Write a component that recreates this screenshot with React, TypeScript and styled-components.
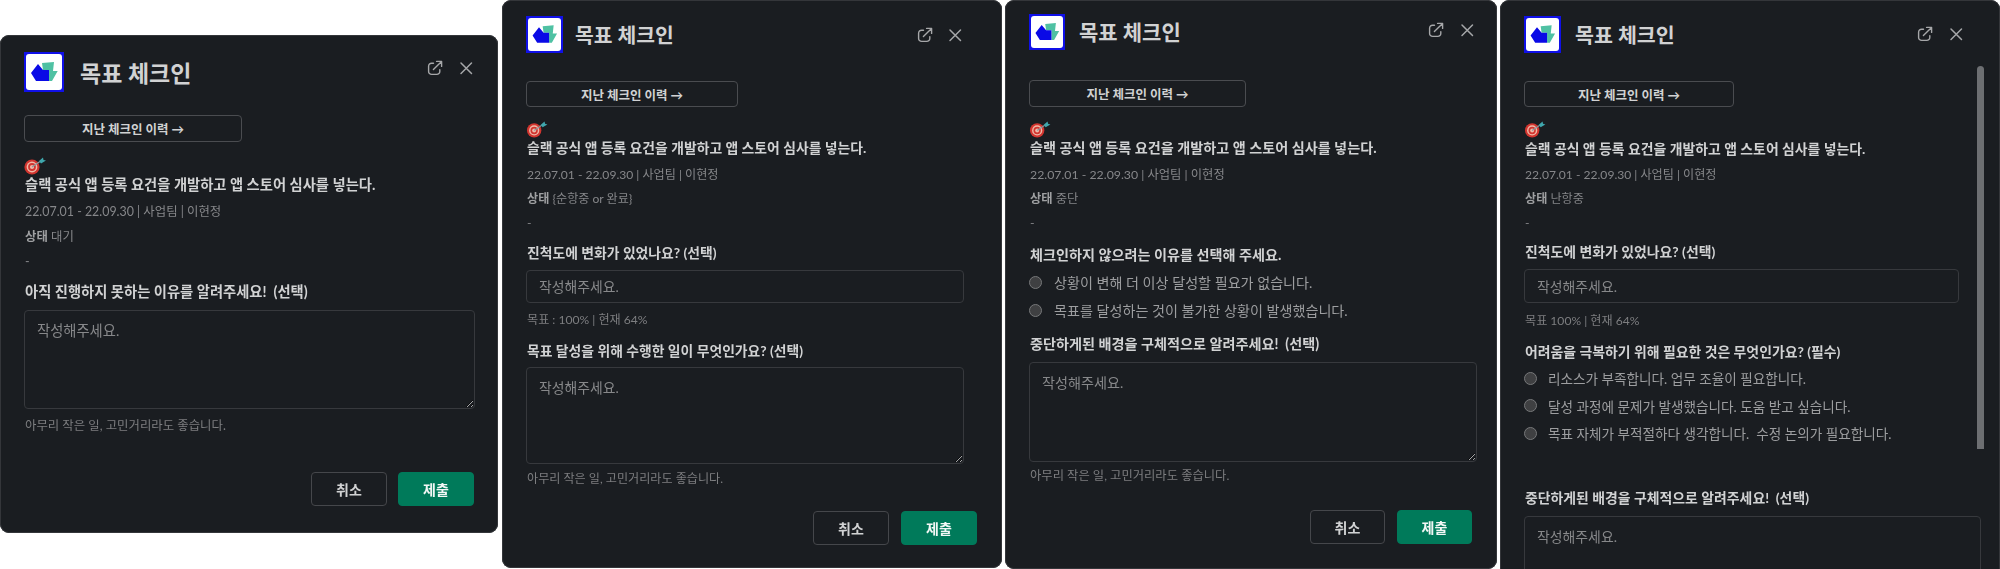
import React from "react";
import styled, { createGlobalStyle, ThemeProvider } from "styled-components";

const GlobalStyle = createGlobalStyle`
  html, body { margin: 0; padding: 0; background: #ffffff; height: 569px; overflow: hidden; }
  * { box-sizing: border-box; }
`;

const fontStack = `Lato, "Noto Sans CJK KR", sans-serif`;

const Stage = styled.div`
  display: flex;
  align-items: flex-start;
  width: 2000px;
  height: 569px;
  overflow: hidden;
  font-family: ${fontStack};
`;

const Panel = styled.section<{ $clip?: boolean }>`
  position: relative;
  flex: none;
  display: flex;
  flex-direction: column;
  width: ${(p) => p.theme.width}px;
  height: ${(p) => (p.$clip ? 640 : p.theme.height)}px;
  margin-top: ${(p) => p.theme.top}px;
  margin-left: ${(p) => p.theme.left}px;
  padding: ${(p) => p.theme.padTop}px 0 ${(p) => p.theme.padBottom}px ${(p) => p.theme.padLeft}px;
  background: #1a1d21;
  border-radius: 9px;
  box-shadow: inset 0 0 0 1px #34363a;
  filter: blur(0.6px);
`;

const Header = styled.header`
  display: flex;
  align-items: center;
  gap: ${(p) => p.theme.titleGap}px;
  padding-right: ${(p) => p.theme.headerPadRight}px;
`;

const LogoBox = styled.div`
  flex: none;
  width: ${(p) => p.theme.logo}px;
  height: ${(p) => p.theme.logo}px;
  background: #1010e8;
  padding: 2px;
`;

const LogoInner = styled.div`
  width: 100%;
  height: 100%;
  background: #ffffff;
  border-radius: 3px;
  svg { display: block; width: 100%; height: 100%; }
`;

const Title = styled.h2`
  flex: 1;
  margin: ${(p) => p.theme.titleTop}px 0 0;
  font-size: ${(p) => p.theme.titleSize}px;
  font-weight: 700;
  line-height: 30px;
  color: #d1d2d3;
`;

const IconRow = styled.div`
  display: flex;
  align-items: center;
  gap: ${(p) => p.theme.iconGap}px;
  margin-top: ${(p) => p.theme.iconTop}px;
  color: #a6a7a9;
  svg { display: block; }
`;

const HistoryButton = styled.button`
  display: block;
  width: ${(p) => p.theme.btnWidth}px;
  height: ${(p) => p.theme.btnHeight}px;
  margin-top: ${(p) => p.theme.btnTop}px;
  padding: 0;
  background: transparent;
  border: 1px solid #4a4c50;
  border-radius: 4px;
  color: #d1d2d3;
  font-family: ${fontStack};
  font-size: ${(p) => p.theme.btnSize}px;
  font-weight: 700;
`;

const Dart = styled.svg`
  display: block;
  flex: none;
  width: 22px;
  height: ${(p) => p.theme.emojiH}px;
  margin-top: ${(p) => p.theme.emojiTop}px;
`;

const Goal = styled.p`
  margin: ${(p) => p.theme.goalTop}px 0 ${(p) => p.theme.goalBottom}px 1px;
  font-size: ${(p) => p.theme.goalSize}px;
  line-height: 20px;
  font-weight: 700;
  color: #d1d2d3;
`;

const Meta = styled.p`
  margin: ${(p) => p.theme.metaGap}px 0 0 1px;
  font-size: ${(p) => p.theme.metaSize}px;
  line-height: 18px;
  color: #86878a;
`;

const StatusName = styled.b`
  color: #9fa0a2;
  font-weight: 700;
`;

const Label = styled.label<{ $top: number }>`
  display: block;
  margin: ${(p) => p.$top}px 0 0 1px;
  font-size: ${(p) => p.theme.goalSize}px;
  line-height: 20px;
  font-weight: 700;
  color: #d1d2d3;
  white-space: pre;
`;

const fieldCss = `
  display: block;
  flex: none;
  background: #1a1d21;
  border: 1px solid #37393d;
  border-radius: 4px;
  color: #d1d2d3;
  font-family: ${fontStack};
  outline: none;
  &::placeholder { color: #87888a; opacity: 1; }
`;

const TextField = styled.input<{ $w: number; $h: number; $top: number }>`
  ${fieldCss}
  width: ${(p) => p.$w}px;
  height: ${(p) => p.$h}px;
  margin-top: ${(p) => p.$top}px;
  padding: 0 12px;
  font-size: ${(p) => p.theme.goalSize}px;
`;

const TextArea = styled.textarea<{ $w: number; $h: number; $top: number }>`
  ${fieldCss}
  width: ${(p) => p.$w}px;
  height: ${(p) => p.$h}px;
  margin-top: ${(p) => p.$top}px;
  padding: 10px 12px;
  font-size: ${(p) => p.theme.goalSize}px;
  line-height: 20px;
  resize: both;
  color-scheme: dark;
`;

const Hint = styled.p<{ $top: number }>`
  margin: ${(p) => p.$top}px 0 0 1px;
  font-size: ${(p) => p.theme.metaSize}px;
  line-height: 18px;
  color: #7d7e80;
`;

const RadioList = styled.div<{ $top: number; $gap: number }>`
  display: flex;
  flex-direction: column;
  gap: ${(p) => p.$gap}px;
  margin-top: ${(p) => p.$top}px;
`;

const RadioRow = styled.label<{ $size: number; $gap: number }>`
  display: flex;
  align-items: center;
  gap: ${(p) => p.$gap}px;
  height: 18px;
  font-size: ${(p) => p.$size}px;
  color: #9d9ea0;
  white-space: pre;
`;

const Radio = styled.input.attrs({ type: "radio" })`
  appearance: none;
  flex: none;
  width: 13px;
  height: 13px;
  margin: 0;
  border: 1px solid #77787a;
  border-radius: 50%;
  background: #3f4042;
`;

const Footer = styled.footer`
  display: flex;
  justify-content: flex-end;
  gap: ${(p) => p.theme.actionGap}px;
  margin-top: auto;
  padding-right: ${(p) => p.theme.padRight}px;
`;

const Action = styled.button<{ $primary?: boolean }>`
  width: ${(p) => p.theme.actionW}px;
  height: 34px;
  padding: 0;
  border-radius: 4px;
  border: 1px solid ${(p) => (p.$primary ? "#007a5a" : "#45474b")};
  background: ${(p) => (p.$primary ? "#007a5a" : "transparent")};
  color: ${(p) => (p.$primary ? "#f2f7f5" : "#d1d2d3")};
  font-family: ${fontStack};
  font-size: 14px;
  font-weight: 700;
`;

const ScrollThumb = styled.div`
  position: absolute;
  left: 477px;
  top: 66px;
  width: 7px;
  height: 383px;
  border-radius: 4px 4px 0 0;
  background: #6d6f72;
`;

const Logo = () => (
  <LogoBox>
    <LogoInner>
      <svg viewBox="2 2 36 36">
        <polygon points="18,11 30,10 29,19 33.7,19 28,29 25,29 25,18 19,18" fill="#4fc1a3" />
        <polygon points="7,21 14,12 19,18 25,18 25,29 12,29" fill="#0a0ae6" />
      </svg>
    </LogoInner>
  </LogoBox>
);

const HeaderIcons = () => (
  <IconRow>
    <svg width="16" height="16" viewBox="0 0 16 16" fill="none" stroke="currentColor" strokeWidth="1.4" strokeLinecap="round" strokeLinejoin="round">
      <path d="M6.5 3.2H4.6A3 3 0 0 0 1.6 6.2v5.2a3 3 0 0 0 3 3h5.2a3 3 0 0 0 3-3V9.6" />
      <path d="M6.4 9.6 14.3 1.7M9.6 1.4h5v5" />
    </svg>
    <svg width="14" height="14" viewBox="0 0 14 14" fill="none" stroke="currentColor" strokeWidth="1.5" strokeLinecap="round">
      <path d="M2 2 12.5 12.5M12.5 2 2 12.5" />
    </svg>
  </IconRow>
);

const DartEmoji = () => (
  <Dart viewBox="0 0 22 18">
    <circle cx="8" cy="10" r="7.6" fill="#d2352f" />
    <circle cx="8" cy="10" r="5.4" fill="#f0b9a8" />
    <circle cx="8" cy="10" r="3.9" fill="#d2352f" />
    <circle cx="8" cy="10" r="2.1" fill="#f0b9a8" />
    <path d="M8 10 16 4.5" stroke="#8a9aa0" strokeWidth="1.2" />
    <polygon points="15,4 19,0.5 19.5,3 22,3.6 17,6.5" fill="#3fa7ad" />
  </Dart>
);

const Common = ({ status, title = "목표 체크인" }: { status: string; title?: string }) => (
  <>
    <Header>
      <Logo />
      <Title>{title}</Title>
      <HeaderIcons />
    </Header>
    <HistoryButton>지난 체크인 이력 →</HistoryButton>
    <DartEmoji />
    <Goal>슬랙 공식 앱 등록 요건을 개발하고 앱 스토어 심사를 넣는다.</Goal>
    <Meta>22.07.01 - 22.09.30 | 사업팀 | 이현정</Meta>
    <Meta>
      <StatusName>상태</StatusName> {status}
    </Meta>
    <Meta>-</Meta>
  </>
);

const Actions = () => (
  <Footer>
    <Action>취소</Action>
    <Action $primary>제출</Action>
  </Footer>
);

const base = { padLeft: 24, padRight: 24, iconTop: -8, btnSize: 12.5, goalTop: 0, goalBottom: 0, titleTop: 0, metaGap: 6, actionW: 76, actionGap: 11 };

const m1 = { ...base, width: 498, height: 498, top: 35, left: 0, padTop: 17, padBottom: 27, logo: 40, titleSize: 23, titleTop: 2, titleGap: 16, headerPadRight: 25, iconGap: 16, btnWidth: 218, btnHeight: 27, btnTop: 23, emojiTop: 15, emojiH: 18, goalSize: 14.3, goalBottom: 1, metaSize: 12.4, metaGap: 7 };
const m2 = { ...base, width: 500, height: 568, top: 0, left: 4, padTop: 16, padBottom: 23, logo: 37, titleSize: 20.4, titleGap: 12, headerPadRight: 40, iconGap: 15, btnWidth: 212, btnHeight: 26, btnTop: 28, emojiTop: 14, emojiH: 17, goalSize: 13.85, goalBottom: 2, metaSize: 12.1, padRight: 25, actionGap: 12, iconTop: 0 };
const m3 = { ...base, width: 492, height: 569, top: 0, left: 3, padTop: 14, padBottom: 25, logo: 36, titleSize: 21, titleGap: 14, headerPadRight: 23, iconGap: 16, btnWidth: 217, btnHeight: 27, btnTop: 30, emojiTop: 14, emojiH: 17, goalSize: 14.15, goalBottom: 2, metaSize: 12.3, padRight: 25, actionW: 75, actionGap: 12, iconTop: -4 };
const m4 = { ...base, width: 500, height: 640, top: 0, left: 3, padTop: 16, padBottom: 23, logo: 37, titleSize: 20.6, titleGap: 14, headerPadRight: 37, iconGap: 16, btnWidth: 210, btnHeight: 26, btnTop: 28, emojiTop: 14, emojiH: 17, goalSize: 13.9, goalTop: 1, goalBottom: 1, metaSize: 12.1, iconTop: -2 };

export default function App() {
  return (
    <>
      <GlobalStyle />
      <Stage>
        <ThemeProvider theme={m1}>
          <Panel>
            <Common status="대기" />
            <Label $top={11}>{"아직 진행하지 못하는 이유를 알려주세요!  (선택)"}</Label>
            <TextArea $w={451} $h={99} $top={8} placeholder="작성해주세요." />
            <Hint $top={8}>아무리 작은 일, 고민거리라도 좋습니다.</Hint>
            <Actions />
          </Panel>
        </ThemeProvider>

        <ThemeProvider theme={m2}>
          <Panel>
            <Common status="{순항중 or 완료}" />
            <Label $top={11}>진척도에 변화가 있었나요? (선택)</Label>
            <TextField $w={438} $h={33} $top={7} placeholder="작성해주세요." />
            <Hint $top={8}>목표 : 100% | 현재 64%</Hint>
            <Label $top={12}>목표 달성을 위해 수행한 일이 무엇인가요? (선택)</Label>
            <TextArea $w={438} $h={97} $top={6} placeholder="작성해주세요." />
            <Hint $top={6}>아무리 작은 일, 고민거리라도 좋습니다.</Hint>
            <Actions />
          </Panel>
        </ThemeProvider>

        <ThemeProvider theme={m3}>
          <Panel>
            <Common status="중단" />
            <Label $top={13}>체크인하지 않으려는 이유를 선택해 주세요.</Label>
            <RadioList $top={8} $gap={10}>
              <RadioRow $size={14.1} $gap={12}>
                <Radio name="stop" />
                상황이 변해 더 이상 달성할 필요가 없습니다.
              </RadioRow>
              <RadioRow $size={14.1} $gap={12}>
                <Radio name="stop" />
                목표를 달성하는 것이 불가한 상황이 발생했습니다.
              </RadioRow>
            </RadioList>
            <Label $top={15}>{"중단하게된 배경을 구체적으로 알려주세요!  (선택)"}</Label>
            <TextArea $w={448} $h={100} $top={8} placeholder="작성해주세요." />
            <Hint $top={5}>아무리 작은 일, 고민거리라도 좋습니다.</Hint>
            <Actions />
          </Panel>
        </ThemeProvider>

        <ThemeProvider theme={m4}>
          <Panel $clip>
            <Common status="난항중" />
            <Label $top={10}>진척도에 변화가 있었나요? (선택)</Label>
            <TextField $w={435} $h={34} $top={7} placeholder="작성해주세요." />
            <Hint $top={9}>목표 100% | 현재 64%</Hint>
            <Label $top={12}>어려움을 극복하기 위해 필요한 것은 무엇인가요? (필수)</Label>
            <RadioList $top={7} $gap={9.5}>
              <RadioRow $size={13.6} $gap={11}>
                <Radio name="need" />
                리소스가 부족합니다. 업무 조율이 필요합니다.
              </RadioRow>
              <RadioRow $size={13.6} $gap={11}>
                <Radio name="need" />
                달성 과정에 문제가 발생했습니다. 도움 받고 싶습니다.
              </RadioRow>
              <RadioRow $size={13.6} $gap={11}>
                <Radio name="need" />
                {"목표 자체가 부적절하다 생각합니다.  수정 논의가 필요합니다."}
              </RadioRow>
            </RadioList>
            <Label $top={46}>{"중단하게된 배경을 구체적으로 알려주세요!  (선택)"}</Label>
            <TextArea $w={457} $h={100} $top={8} placeholder="작성해주세요." />
            <ScrollThumb />
          </Panel>
        </ThemeProvider>
      </Stage>
    </>
  );
}
